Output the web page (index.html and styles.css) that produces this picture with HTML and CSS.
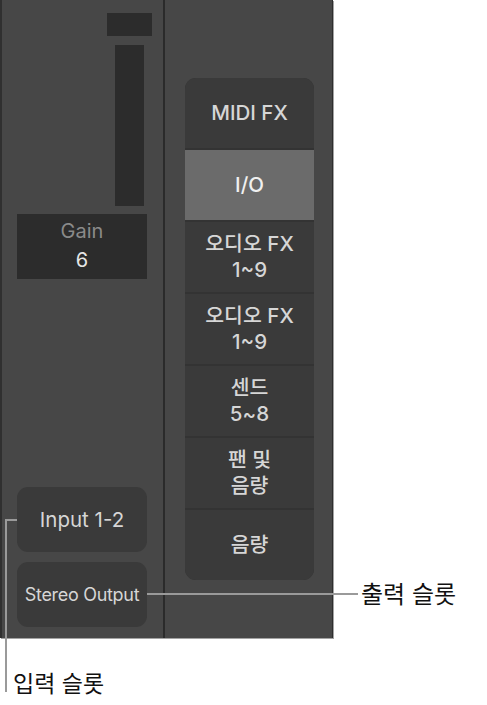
FILE: index.html
```html
<!DOCTYPE html>
<html lang="ko">
<head>
<meta charset="utf-8">
<link rel="stylesheet" href="styles.css">
</head>
<body>
<div class="figure">
  <div class="mixer">
    <div class="strip strip-left">
      <div class="peak"></div>
      <div class="meter"></div>
      <div class="gain">
        <span class="gain-label">Gain</span>
        <span class="gain-value">6</span>
      </div>
      <div class="spacer"></div>
      <div class="slot-btn input-btn">Input 1-2</div>
      <div class="slot-btn output-btn">Stereo Output</div>
    </div>
    <div class="divider"></div>
    <div class="strip strip-right">
      <div class="slots">
        <div class="cell">MIDI FX</div>
        <div class="cell active">I/O</div>
        <div class="cell">오디오 FX<br>1~9</div>
        <div class="cell">오디오 FX<br>1~9</div>
        <div class="cell">센드<br>5~8</div>
        <div class="cell">팬 및<br>음량</div>
        <div class="cell">음량</div>
      </div>
    </div>
  </div>
  <div class="callout-in-h"></div>
  <div class="callout-in-v"></div>
  <div class="callout-in-label">입력 슬롯</div>
  <div class="callout-out-h"></div>
  <div class="callout-out-label">출력 슬롯</div>
</div>
</body>
</html>
```

FILE: styles.css
```css
html, body {
  margin: 0;
  padding: 0;
  background: #ffffff;
}
body {
  width: 487px;
  height: 705px;
  overflow: hidden;
  font-family: Inter, "Noto Sans CJK KR", sans-serif;
}
.figure {
  position: relative;
  width: 487px;
  height: 705px;
}
.mixer {
  display: flex;
  width: 330px;
  height: 638px;
  background: #474747;
  border-left: 2px solid #303030;
  border-right: 1px solid #2e2e2e;
  box-shadow: 1px 1px 0 #a3a3a3;
  box-sizing: content-box;
}
.strip {
  display: flex;
  flex-direction: column;
}
.strip-left {
  width: 161px;
}
.divider {
  width: 2px;
  background: #2b2b2b;
}
.strip-right {
  flex: 1;
}
.peak {
  margin: 13px 0 0 105px;
  width: 45px;
  height: 23px;
  background: #2c2c2c;
}
.meter {
  margin: 9px 0 0 113px;
  width: 29px;
  height: 161px;
  background: #2c2c2c;
}
.gain {
  margin: 8px 0 0 15px;
  width: 130px;
  height: 65px;
  background: #2c2c2c;
  display: flex;
  flex-direction: column;
  align-items: center;
  justify-content: center;
  font-size: 20px;
  line-height: 29px;
  padding-bottom: 2px;
  box-sizing: border-box;
}
.gain-label {
  color: #8a8a8a;
}
.gain-value {
  color: #e6e6e6;
}
.spacer {
  flex: 1;
}
.slot-btn {
  margin-left: 15px;
  width: 130px;
  height: 65px;
  border-radius: 11px;
  background: #3a3a3a;
  color: #d6d6d6;
  display: flex;
  align-items: center;
  justify-content: center;
  white-space: nowrap;
}
.input-btn {
  font-size: 20.5px;
}
.output-btn {
  margin-top: 10px;
  margin-bottom: 11px;
  font-size: 18px;
  letter-spacing: -0.3px;
}
.slots {
  margin: 78px 0 0 20px;
  width: 129px;
  border-radius: 11px;
  overflow: hidden;
  background: #333333;
  display: flex;
  flex-direction: column;
  gap: 2px;
}
.cell {
  height: 70px;
  background: #3a3a3a;
  color: #d6d6d6;
  font-size: 20.5px;
  font-weight: 500;
  line-height: 26px;
  display: flex;
  align-items: center;
  justify-content: center;
  text-align: center;
}
.cell.active {
  background: #6b6b6b;
  color: #f0f0f0;
}
.callout-in-h {
  position: absolute;
  left: 5px;
  top: 519px;
  width: 12px;
  height: 2px;
  background: #9a9a9a;
}
.callout-in-v {
  position: absolute;
  left: 5px;
  top: 519px;
  width: 2px;
  height: 173px;
  background: #9a9a9a;
}
.callout-in-label {
  position: absolute;
  left: 13px;
  top: 667px;
  font-size: 23px;
  line-height: 30px;
  color: #111111;
  font-family: "Noto Sans CJK KR", sans-serif;
}
.callout-out-h {
  position: absolute;
  left: 147px;
  top: 593px;
  width: 211px;
  height: 2px;
  background: #9a9a9a;
}
.callout-out-label {
  position: absolute;
  left: 361px;
  top: 578px;
  font-size: 24px;
  line-height: 30px;
  color: #111111;
  font-family: "Noto Sans CJK KR", sans-serif;
}
```
